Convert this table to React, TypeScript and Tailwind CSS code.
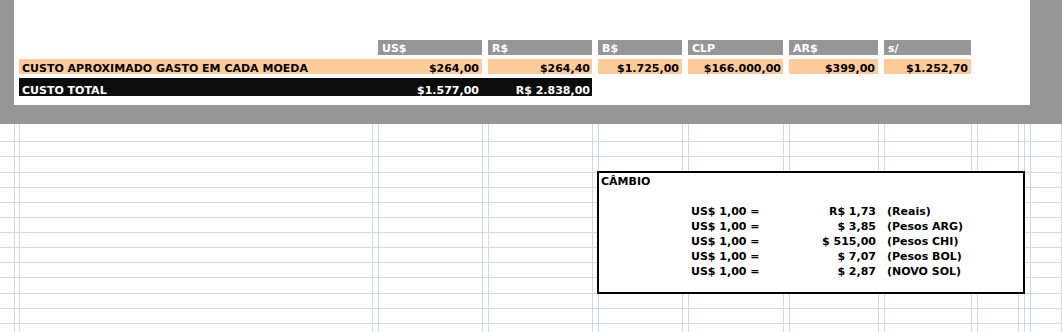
import React from "react";

const colW = [
  "w-[15px]", "w-[5px]", "w-[353px]", "w-[6px]", "w-[104px]", "w-[6px]", "w-[104px]", "w-[6px]",
  "w-[84px]", "w-[6px]", "w-[95px]", "w-[6px]", "w-[89px]", "w-[6px]", "w-[87px]", "w-[6px]",
  "w-[41px]", "w-[6px]", "w-[6px]", "w-[31px]",
];
const rowH = [
  "h-[18px]", "h-[15px]", "h-[16px]", "h-[15px]", "h-[15px]", "h-[15px]", "h-[15px]",
  "h-[15px]", "h-[15px]", "h-[15px]", "h-[16px]", "h-[15px]", "h-[15px]", "h-[9px]",
];

const headers: { label: string; w: string }[] = [
  { label: "US$", w: "w-[104px]" },
  { label: "R$", w: "w-[104px]" },
  { label: "B$", w: "w-[84px]" },
  { label: "CLP", w: "w-[95px]" },
  { label: "AR$", w: "w-[89px]" },
  { label: "s/", w: "w-[87px]" },
];

const orange: { v: string; w: string; pr: string }[] = [
  { v: "$264,40", w: "w-[104px]", pr: "pr-[2px]" },
  { v: "$1.725,00", w: "w-[84px]", pr: "pr-[3px]" },
  { v: "$166.000,00", w: "w-[95px]", pr: "pr-[2px]" },
  { v: "$399,00", w: "w-[89px]", pr: "pr-[3px]" },
  { v: "$1.252,70", w: "w-[87px]", pr: "pr-[3px]" },
];

const rates = [
  { v: "R$ 1,73", l: "(Reais)" },
  { v: "$ 3,85", l: "(Pesos ARG)" },
  { v: "$ 515,00", l: "(Pesos CHI)" },
  { v: "$ 7,07", l: "(Pesos BOL)" },
  { v: "$ 2,87", l: "(NOVO SOL)" },
];

export default function App() {
  return (
    <div className="relative w-[1062px] h-[332px] overflow-hidden bg-white font-['DejaVu_Sans',sans-serif] text-[11px] font-bold leading-[10px] text-black">
      {/* top framed area */}
      <div className="h-[124px] bg-[#969696]">
        <div className="ml-[14px] w-[1016px] h-[105px] bg-white pt-[40px] pl-[5px]">
          {/* header row */}
          <div className="flex h-[15px]">
            <div className="w-[359px]" />
            {headers.map((h, i) => (
              <div key={h.label} className={`flex items-end ${h.w} ${i > 0 ? "ml-[6px]" : ""} bg-[#969696] pl-[4px] pb-[1px] text-white`}>
                <span>{h.label}</span>
              </div>
            ))}
          </div>
          {/* orange row */}
          <div className="mt-[4px] flex h-[15px]">
            <div className="flex w-[463px] items-end justify-between bg-[#ffcc99] pl-[3px] pr-[3px]">
              <span>CUSTO APROXIMADO GASTO EM CADA MOEDA</span>
              <span>$264,00</span>
            </div>
            {orange.map((o) => (
              <div key={o.v} className={`ml-[6px] flex ${o.w} items-end justify-end bg-[#ffcc99] ${o.pr}`}>
                <span>{o.v}</span>
              </div>
            ))}
          </div>
          {/* black row */}
          <div className="mt-[4px] flex h-[18px] w-[573px] bg-[#0c0c0c] text-white">
            <div className="flex w-[463px] items-end justify-between pl-[3px] pr-[3px]">
              <span>CUSTO TOTAL</span>
              <span>$1.577,00</span>
            </div>
            <div className="ml-[6px] flex w-[104px] items-end justify-end pr-[2px]">
              <span>R$ 2.838,00</span>
            </div>
          </div>
        </div>
      </div>

      {/* spreadsheet grid */}
      <div className="flex flex-col">
        {rowH.map((h, r) => (
          <div key={r} className={`flex ${h}`}>
            {colW.map((w, c) => (
              <div
                key={c}
                className={`${w} shrink-0 border-r border-[#d0d7e5] ${r < rowH.length - 1 ? "border-b" : ""}`}
              />
            ))}
          </div>
        ))}
      </div>

      {/* Câmbio box */}
      <div className="absolute left-[597px] top-[171px] w-[428px] h-[123px] border-2 border-black bg-white">
        <div className="flex h-[14px] items-end pl-[2px]">
          <span>CÂMBIO</span>
        </div>
        <div className="h-[15px]" />
        {rates.map((r) => (
          <div key={r.l} className="flex h-[15px] items-end">
            <div className="w-[90px]" />
            <div className="w-[95px] pl-[2px]">US$ 1,00 =</div>
            <div className="w-[94px] pr-[2px] text-right">{r.v}</div>
            <div className="pl-[9px]">{r.l}</div>
          </div>
        ))}
      </div>
    </div>
  );
}
